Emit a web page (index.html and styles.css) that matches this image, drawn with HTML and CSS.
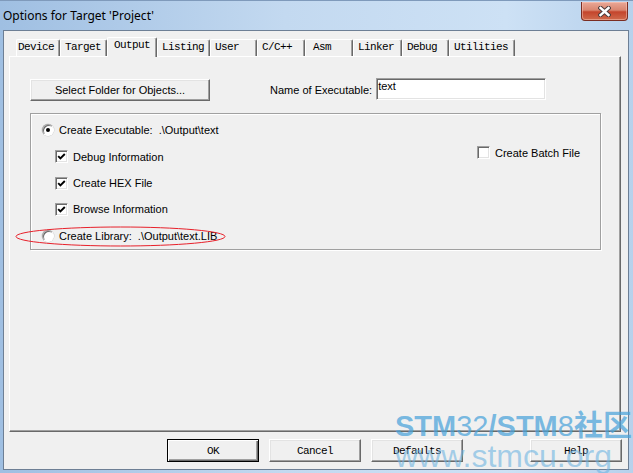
FILE: index.html
```html
<!DOCTYPE html>
<html lang="en">
<head>
    <meta charset="UTF-8">
    <meta name="viewport" content="width=device-width, initial-scale=1.0">
    <title>Options for Target 'Project'</title>
    <link rel="stylesheet" href="styles.css">
</head>
<body>
    <div class="window">
        <!-- Title bar -->
        <div class="titlebar">
            <span class="title">Options for Target 'Project'</span>
            <button class="close-btn">
                <svg width="13" height="11" viewBox="0 0 13 11">
                    <path d="M2.5 2 L10.5 9 M10.5 2 L2.5 9" stroke="#4b3b3b" stroke-width="4.4" stroke-linecap="square"></path>
                    <path d="M2.5 2 L10.5 9 M10.5 2 L2.5 9" stroke="#fff" stroke-width="2.4" stroke-linecap="square"></path>
                </svg>
            </button>
        </div>

        <div class="client">
            <!-- Tab strip -->
            <div class="tabs">
                <div class="tab tab-device">Device</div>
                <div class="tab tab-target">Target</div>
                <div class="tab tab-output active">Output</div>
                <div class="tab tab-listing">Listing</div>
                <div class="tab tab-user">User</div>
                <div class="tab tab-cc">C/C++</div>
                <div class="tab tab-asm">Asm</div>
                <div class="tab tab-linker">Linker</div>
                <div class="tab tab-debug">Debug</div>
                <div class="tab tab-utilities">Utilities</div>
            </div>

            <!-- Output page -->
            <div class="panel">
                <div class="folder-row">
                    <button class="btn btn-folder">Select Folder for Objects...</button>
                    <label class="exe-label" for="exeName">Name of Executable:</label>
                    <input class="exe-input" id="exeName" type="text" value="text">
                </div>

                <div class="group">
                    <div class="options">
                        <div class="opt">
                            <span class="radio checked"></span>
                            <span>Create Executable:&nbsp; .\Output\text</span>
                        </div>
                        <div class="opt sub">
                            <span class="check">
                                <svg width="9" height="9" viewBox="0 0 9 9"><path d="M1.2 4.2 L3.4 6.5 L7.8 2" stroke="#000" stroke-width="1.9" fill="none"></path></svg>
                            </span>
                            <span>Debug Information</span>
                        </div>
                        <div class="opt sub">
                            <span class="check">
                                <svg width="9" height="9" viewBox="0 0 9 9"><path d="M1.2 4.2 L3.4 6.5 L7.8 2" stroke="#000" stroke-width="1.9" fill="none"></path></svg>
                            </span>
                            <span>Create HEX File</span>
                        </div>
                        <div class="opt sub">
                            <span class="check">
                                <svg width="9" height="9" viewBox="0 0 9 9"><path d="M1.2 4.2 L3.4 6.5 L7.8 2" stroke="#000" stroke-width="1.9" fill="none"></path></svg>
                            </span>
                            <span>Browse Information</span>
                        </div>
                        <div class="opt opt-lib">
                            <span class="radio"></span>
                            <span>Create Library:&nbsp; .\Output\text.LIB</span>
                            <!-- red marker round the library option -->
                            <svg class="mark" width="211" height="21" viewBox="0 0 211 21">
                                <ellipse cx="105.5" cy="10.5" rx="104.5" ry="9.5" stroke="#e8202a" stroke-width="1" fill="none"></ellipse>
                            </svg>
                        </div>
                    </div>
                    <div class="opt batch">
                        <span class="check"></span>
                        <span>Create Batch File</span>
                    </div>
                </div>
            </div>

            <!-- Dialog buttons -->
            <div class="actions">
                <button class="btn btn-default">OK</button>
                <button class="btn">Cancel</button>
                <button class="btn">Defaults</button>
                <button class="btn btn-help">Help</button>
            </div>
        </div>

        <div class="watermark">
            <div class="wm-top"><b>STM</b>32<b>/STM</b>8<b>社区</b></div>
            <div class="wm-url">www.stmcu.org</div>
        </div>
    </div>
</body>
</html>
```

FILE: styles.css
```css
* {
    box-sizing: border-box;
}

body {
    margin: 0;
    background: #c4daf1;
}

.window {
    position: relative;
    width: 633px;
    height: 473px;
    overflow: hidden;
    background: linear-gradient(to right, #9fbfe2, #c3d9f0 45%, #cde1f5 80%, #b7d1ec);
    border-top: 1px solid #7f9abb;
}

/* Title bar */
.titlebar {
    display: flex;
    align-items: flex-start;
    height: 29px;
    padding-left: 3px;
}

.title {
    margin-top: 6px;
    font-family: "Noto Sans", "Open Sans", sans-serif;
    font-size: 12px;
    line-height: 17px;
    color: #000;
}

.close-btn {
    display: flex;
    align-items: center;
    justify-content: center;
    margin-left: auto;
    margin-top: 1px;
    margin-right: 5px;
    width: 47px;
    height: 19px;
    padding: 0;
    border: 1px solid #7a2d22;
    border-top: none;
    border-radius: 0 0 4px 4px;
    background: linear-gradient(to bottom, #e9a897 0%, #d98670 45%, #c4452c 55%, #cf6a4c 100%);
    box-shadow: inset 0 0 0 1px rgba(255, 210, 200, 0.45);
}

/* Client area */
.client {
    height: 440px;
    margin: 0 4px 0 3px;
    padding-top: 6px;
    background: #f0f0f0;
    border: 1px solid #6d7f95;
}

.tabs {
    display: flex;
    align-items: flex-end;
    height: 19px;
    padding-left: 12px;
}

.tab {
    height: 17px;
    padding: 1px 0 0 4px;
    font-family: "Liberation Mono", monospace;
    font-size: 11px;
    letter-spacing: -0.6px;
    line-height: 13px;
    color: #000;
    white-space: pre;
    background: #f0f0f0;
    border-top: 1px solid #fff;
    border-left: 1px solid #fff;
    border-right: 1px solid #696969;
    border-radius: 2px 2px 0 0;
    box-shadow: inset -1px 0 #a0a0a0;
}

.tab.active {
    position: relative;
    z-index: 1;
    height: 20px;
    margin-bottom: -1px;
    padding-left: 6px;
}

.tab-device { width: 44px; padding-left: 1px; }
.tab-target { width: 47px; }
.tab-output { width: 50px; }
.tab-listing { width: 53px; }
.tab-user { width: 47px; }
.tab-cc { width: 48px; }
.tab-asm { width: 48px; padding-left: 7px; }
.tab-linker { width: 49px; }
.tab-debug { width: 47px; }
.tab-utilities { width: 66px; }

.panel {
    width: 612px;
    height: 376px;
    margin-left: 5px;
    padding: 21px 0 0 20px;
    border-top: 1px solid #fff;
    border-left: 1px solid #fff;
    border-right: 1px solid #696969;
    border-bottom: 1px solid #696969;
    box-shadow: inset -1px -1px #a0a0a0;
}

/* Raised push button, dialog font */
.btn {
    padding: 0;
    background: #f0f0f0;
    border: 1px solid;
    border-color: #fff #696969 #696969 #fff;
    box-shadow: inset -1px -1px #a0a0a0, inset 1px 1px #e3e3e3;
    font-family: "Liberation Mono", monospace;
    font-size: 11px;
    letter-spacing: -0.6px;
    color: #000;
}

/* Shared text for the page controls */
.exe-label,
.exe-input,
.opt,
.btn-folder {
    font-family: "Liberation Sans", Arial, sans-serif;
    font-size: 11px;
    letter-spacing: 0;
    color: #000;
}

.folder-row {
    display: flex;
    align-items: flex-start;
    height: 23px;
}

.btn-folder {
    width: 180px;
    height: 22px;
    margin-top: 1px;
    white-space: nowrap;
}

.exe-label {
    margin: 6px 0 0 60px;
    line-height: 12px;
}

.exe-input {
    width: 170px;
    height: 22px;
    margin-left: 4px;
    padding: 0 0 6px 1px;
    background: #fff;
    border: 1px solid;
    border-color: #a0a0a0 #fff #fff #a0a0a0;
    box-shadow: inset 1px 1px #696969, inset -1px -1px #e3e3e3;
    outline: none;
}

/* Output options box */
.group {
    display: flex;
    width: 571px;
    height: 137px;
    margin-top: 12px;
    padding: 3px 0 0 11px;
    border: 1px solid #a0a0a0;
    box-shadow: 1px 1px 0 #fff, inset 1px 1px 0 #fff;
}

.options {
    display: flex;
    flex-direction: column;
}

.opt {
    display: flex;
    align-items: center;
    gap: 5px;
    height: 26.5px;
    white-space: nowrap;
}

.opt.sub {
    padding-left: 13px;
}

.opt-lib {
    position: relative;
}

.mark {
    position: absolute;
    left: -27px;
    top: 3px;
}

.batch {
    height: 13px;
    margin: 29px 20px 0 auto;
}

.radio {
    position: relative;
    flex: none;
    width: 12px;
    height: 12px;
    border-radius: 50%;
    background: #fff;
    border: 1px solid;
    border-color: #a0a0a0 #fff #fff #a0a0a0;
    box-shadow: inset 1px 1px #696969, 0 0 0 0.5px #cfcfcf;
}

.radio.checked::after {
    content: "";
    position: absolute;
    left: 3px;
    top: 3px;
    width: 4px;
    height: 4px;
    border-radius: 50%;
    background: #000;
}

.check {
    display: flex;
    align-items: center;
    justify-content: center;
    flex: none;
    width: 13px;
    height: 13px;
    background: #fff;
    border: 1px solid;
    border-color: #a0a0a0 #fff #fff #a0a0a0;
    box-shadow: inset 1px 1px #696969, inset -1px -1px #e3e3e3;
}

/* Dialog buttons */
.actions {
    display: flex;
    gap: 10px;
    margin-top: 7px;
    padding: 0 6px 0 163px;
}

.actions .btn {
    width: 92px;
    height: 23px;
}

.btn-default {
    border: 1px solid #000;
    box-shadow: inset 1px 1px #fff, inset -1px -1px #696969, inset -2px -2px #a0a0a0;
}

.btn-help {
    margin-left: auto;
}

/* Site stamp */
.watermark {
    position: absolute;
    left: 395px;
    top: 410px;
    color: rgba(74, 163, 218, 0.72);
    pointer-events: none;
}

.wm-top {
    font-family: "Liberation Sans", "Noto Sans CJK SC", sans-serif;
    font-size: 29px;
    line-height: 30px;
    white-space: nowrap;
}

.wm-top b {
    font-weight: bold;
}

.wm-url {
    font-family: "Liberation Sans", sans-serif;
    font-size: 32px;
    line-height: 30px;
    color: rgba(110, 180, 225, 0.6);
}
```
